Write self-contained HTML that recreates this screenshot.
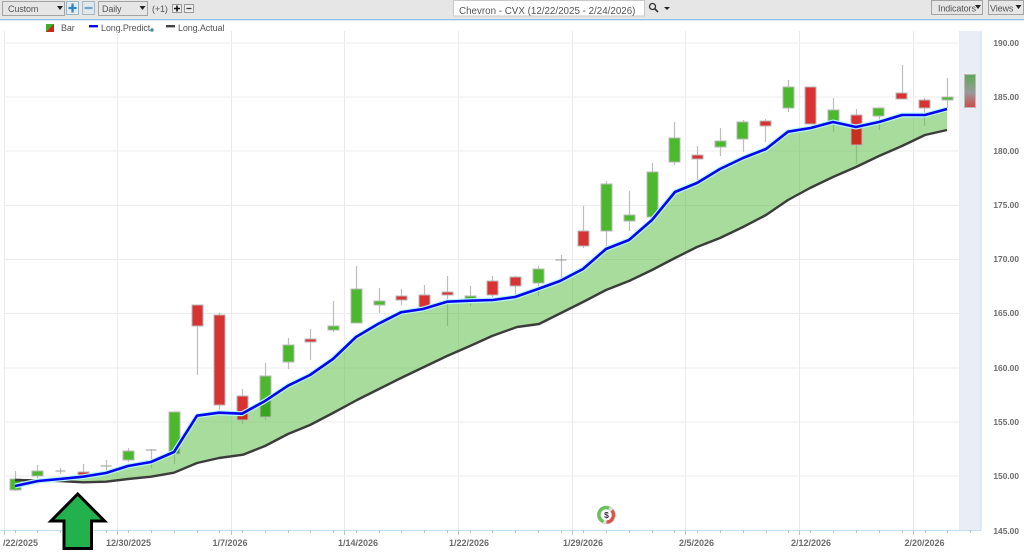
<!DOCTYPE html>
<html><head><meta charset="utf-8"><style>
html,body{margin:0;padding:0;background:#fff}
body{width:1024px;height:553px;overflow:hidden;position:relative}
svg{display:block;position:absolute;left:0;top:0;filter:blur(.3px)}
text{font-family:"Liberation Sans",sans-serif}
.tb{font-size:9px;fill:#555;letter-spacing:-.12px}
.ax{font-size:9px;fill:#6c6c6c;font-weight:bold}
.pr{font-size:8.4px}
.bx{fill:#e6e6e6;stroke:#a3a3a3;stroke-width:1}
.g rect{fill:#4cb82e;stroke:#b8b8b8;stroke-width:1}
.r rect{fill:#d93232;stroke:#b8b8b8;stroke-width:1}
</style></head><body>
<svg width="1024" height="553" viewBox="0 0 1024 553" xmlns="http://www.w3.org/2000/svg">
<defs>
<linearGradient id="fc" x1="0" y1="0" x2="0" y2="1"><stop offset="0" stop-color="#5fa855"/><stop offset=".55" stop-color="#999"/><stop offset="1" stop-color="#d04848"/></linearGradient>
<clipPath id="cf"><path d="M15 486L38 481L60 479L83 476.7L106 473L128 466L151 462L174 452L197 415.7L219 412.7L242 413.7L265 401L288 385.7L310 375L333 359L356 337L378 324L401 312.3L423 309L447 301.7L470 300.7L493 300L515 297L538 289L560 281L583 269L606 249L629 240L652 220L675 192L697 183L720 169L743 158L766 149L788 131.7L810.6 128L833 122L856 127L879 122L902 115L925 115L947 109L947 130L925 135L902 146L879 156L856 167L833 177L810 188L788 200L766 215L743 227L720 238L697 247L675 258L652 270L629 281L606 290L583 302L561 313L539 324L517 327L492 336L470 346L447 356L424 367L401 378L379 389L357 400L333 413L310 425L288 434L265 446L243 454.7L219 458L197 463L174 472.7L151 476.7L128 479L106 481.7L83 482.3L60 481L38 480.5L15 480Z"/></clipPath>
</defs>
<rect width="1024" height="553" fill="#fff"/>
<!-- toolbar -->
<rect width="1024" height="19" fill="#e6e6e6"/>
<rect x="0" y="19" width="1024" height="1.3" fill="#8fc3e6"/>
<rect x="2.5" y="1.5" width="62" height="14" class="bx"/>
<text x="8" y="12" class="tb">Custom</text>
<path d="M57 6h6l-3 4z" fill="#222"/>
<rect x="66.5" y="1.5" width="12" height="13" fill="#e3eef6" stroke="#9db4c4"/>
<path d="M72.5 3.5v9M68.5 8h8" stroke="#2a83c4" stroke-width="2.2"/>
<rect x="82.5" y="1.5" width="12" height="13" fill="#e0e8ee" stroke="#a9b6c0"/>
<path d="M84.5 8h8" stroke="#6fa8cc" stroke-width="2.2"/>
<rect x="98.5" y="1.5" width="49" height="14" class="bx"/>
<text x="102" y="12" class="tb">Daily</text>
<path d="M139.5 6h6l-3 4z" fill="#222"/>
<text x="152" y="12" class="tb">(+1)</text>
<rect x="172.5" y="4.5" width="9" height="8" fill="#eee" stroke="#999"/>
<path d="M177 5.5v6M174 8.5h6" stroke="#111" stroke-width="1.6"/>
<rect x="184.5" y="4.5" width="9" height="8" fill="#eee" stroke="#999"/>
<path d="M186.5 8.5h5" stroke="#333" stroke-width="1.3"/>
<rect x="453.5" y="0.5" width="191" height="15.5" fill="#fff" stroke="#c8c8c8"/>
<text x="459" y="14" fill="#555" style="font-size:9.8px">Chevron - CVX (12/22/2025 - 2/24/2026)</text>
<circle cx="652.5" cy="6.5" r="3" fill="none" stroke="#333" stroke-width="1.3"/>
<path d="M654.5 8.5l3.5 3.5" stroke="#333" stroke-width="1.6"/>
<path d="M664 7h6l-3 3z" fill="#222"/>
<rect x="931.5" y="0.5" width="51" height="14" class="bx"/>
<text x="938" y="11.500" class="tb">Indicators</text>
<path d="M975 5h6l-3 4z" fill="#222"/>
<rect x="988.5" y="0.5" width="35" height="14" class="bx"/>
<text x="990" y="11.500" class="tb">Views</text>
<path d="M1015.5 5h6l-3 4z" fill="#222"/>
<!-- legend -->
<rect x="46" y="24" width="8" height="8" fill="#d92020"/>
<path d="M46 24h8l-8 8z" fill="#3fae2a"/>
<text x="61" y="31" class="tb">Bar</text>
<rect x="89" y="25" width="9" height="2.4" fill="#0a0aee"/>
<text x="101" y="31" class="tb">Long.Predict</text>
<circle cx="152" cy="30" r="1.7" fill="#3a8aa5"/>
<rect x="166" y="25" width="9" height="2.4" fill="#444"/>
<text x="178" y="31" class="tb">Long.Actual</text>
<!-- forecast band -->
<rect x="959" y="31" width="21.5" height="499.5" fill="#e8edf6"/>
<path d="M981 31v499.5" stroke="#c6def2" stroke-width="1"/>
<!-- grid -->
<path d="M4.5 31V530M117.5 31V530M231.5 31V530M344.5 31V530M458.5 31V530M572.5 31V530M685.5 31V530M799.5 31V530M913.5 31V530" stroke="#ebebeb" stroke-width="1"/>
<path d="M4 43h955M4 97h955M4 151h955M4 205.5h955M4 259.5h955M4 313.5h955M4 368h955M4 422h955M4 476h955" stroke="#ececec" stroke-width="1"/>
<!-- axis -->
<path d="M0 530.5H981" stroke="#c3dff2" stroke-width="1"/>
<path d="M4.5 530v5M15.5 530v3M37.5 530v3M60.5 530v3M83.5 530v3M106.5 530v3M117.5 530v5M128.5 530v3M151.5 530v3M174.5 530v3M197.5 530v3M219.5 530v3M231.5 530v5M242.5 530v3M265.5 530v3M288.5 530v3M310.5 530v3M333.5 530v3M344.5 530v5M356.5 530v3M379.5 530v3M401.5 530v3M424.5 530v3M447.5 530v3M458.5 530v5M470.5 530v3M492.5 530v3M515.5 530v3M538.5 530v3M561.5 530v3M572.5 530v5M583.5 530v3M606.5 530v3M629.5 530v3M652.5 530v3M674.5 530v3M685.5 530v5M697.5 530v3M720.5 530v3M743.5 530v3M766.5 530v3M788.5 530v3M799.5 530v5M810.5 530v3M833.5 530v3M856.5 530v3M879.5 530v3M902.5 530v3M913.5 530v5M925.5 530v3M947.5 530v3M970.5 530v3" stroke="#b4c6d2" stroke-width="1"/>
<g class="ax">
<text x="3" y="546">/22/2025</text>
<text x="106" y="546">12/30/2025</text>
<text x="212.500" y="546">1/7/2026</text>
<text x="338" y="546">1/14/2026</text>
<text x="449" y="546">1/22/2026</text>
<text x="563" y="546">1/29/2026</text>
<text x="679" y="546">2/5/2026</text>
<text x="791" y="546">2/12/2026</text>
<text x="904.500" y="546">2/20/2026</text>
<g text-anchor="end" class="pr">
<text x="1019" y="46">190.00</text><text x="1019" y="100">185.00</text><text x="1019" y="154">180.00</text><text x="1019" y="208">175.00</text><text x="1019" y="262">170.00</text><text x="1019" y="316">165.00</text><text x="1019" y="371">160.00</text><text x="1019" y="425">155.00</text><text x="1019" y="479">150.00</text><text x="1019" y="534">145.00</text>
</g></g>
<!-- wicks -->
<path d="M15.5 471v20M37.5 465v13M60.5 468v6M83.5 464v14M106.5 460v14M128.5 448v14M151.5 449v19M174.5 412v52M197.5 305v70M219.5 313v97M242.5 389v35M265.5 363v57M288.5 338v31M310.5 329v31M333.5 301v31M356.5 266v57M379.5 288v25M401.5 289v16M424.5 285v27M447.5 276v50M470.5 286v20M492.5 276v21M515.5 276v20M538.5 266v30M561.5 255v25M583.5 206v42M606.5 181v65M629.5 191v40M652.5 163v55M674.5 122v43M697.5 146v34M720.5 128v28M743.5 120v32M765.5 119v23M788.5 80v32M810.5 87v37M833.5 98v34M856.5 109v55M879.5 108v22M902.5 65v34M924.5 98v28M947.5 78v30" stroke="#bdbdbd" stroke-width="1.2"/>
<path d="M55.5 471h10M100.5 466h11M145.5 450h11M555.5 260h11" stroke="#999" stroke-width="1"/>
<!-- fill -->
<path d="M15 486L38 481L60 479L83 476.7L106 473L128 466L151 462L174 452L197 415.7L219 412.7L242 413.7L265 401L288 385.7L310 375L333 359L356 337L378 324L401 312.3L423 309L447 301.7L470 300.7L493 300L515 297L538 289L560 281L583 269L606 249L629 240L652 220L675 192L697 183L720 169L743 158L766 149L788 131.7L810.6 128L833 122L856 127L879 122L902 115L925 115L947 109L947 130L925 135L902 146L879 156L856 167L833 177L810 188L788 200L766 215L743 227L720 238L697 247L675 258L652 270L629 281L606 290L583 302L561 313L539 324L517 327L492 336L470 346L447 356L424 367L401 378L379 389L357 400L333 413L310 425L288 434L265 446L243 454.7L219 458L197 463L174 472.7L151 476.7L128 479L106 481.7L83 482.3L60 481L38 480.5L15 480Z" fill="rgba(97,191,75,.55)"/>
<!-- green bodies -->
<g class="g">
<rect x="10" y="479" width="11" height="11"/><rect x="32" y="471" width="11" height="5"/><rect x="123" y="451" width="11" height="9"/><rect x="169" y="412" width="11" height="42"/><rect x="260" y="376" width="11" height="41"/><rect x="283" y="345" width="11" height="17"/><rect x="328" y="326" width="11" height="4"/><rect x="351" y="289" width="11" height="34"/><rect x="374" y="301" width="11" height="4"/><rect x="465" y="296" width="11" height="4"/><rect x="533" y="269" width="11" height="14"/><rect x="601" y="184" width="11" height="47"/><rect x="624" y="215" width="11" height="6"/><rect x="647" y="172" width="11" height="45"/><rect x="669" y="138" width="11" height="24"/><rect x="715" y="141" width="11" height="6"/><rect x="737" y="122" width="11" height="17"/><rect x="783" y="87" width="11" height="21"/><rect x="828" y="110" width="11" height="12"/><rect x="873" y="108" width="11" height="8"/><rect x="942" y="97" width="11" height="3"/>
</g>
<!-- red bodies -->
<g class="r">
<rect x="78" y="472" width="11" height="4"/><rect x="192" y="305" width="11" height="21"/><rect x="214" y="315" width="11" height="90"/><rect x="237" y="396" width="11" height="24"/><rect x="305" y="339" width="11" height="3"/><rect x="396" y="296" width="11" height="4"/><rect x="419" y="295" width="11" height="15"/><rect x="442" y="292" width="11" height="3"/><rect x="487" y="281" width="11" height="14"/><rect x="510" y="277" width="11" height="9"/><rect x="578" y="231" width="11" height="15"/><rect x="692" y="155" width="11" height="4"/><rect x="760" y="121" width="11" height="5"/><rect x="805" y="87" width="11" height="37"/><rect x="851" y="115" width="11" height="30"/><rect x="896" y="93" width="11" height="6"/><rect x="919" y="100" width="11" height="8"/>
</g>
<!-- darker parts of bodies where they overlap the area -->
<g clip-path="url(#cf)">
<rect x="10.5" y="479.500" width="10" height="10" fill="#38a61e"/>
<rect x="169.500" y="412.500" width="10" height="41" fill="#38a61e"/>
<rect x="260.500" y="376.500" width="10" height="40" fill="#38a61e"/>
<rect x="647.500" y="172.500" width="10" height="44" fill="#38a61e"/>
<rect x="237.500" y="396.500" width="10" height="23" fill="#c83020"/>
<rect x="419.500" y="295.500" width="10" height="14" fill="#c83020"/>
<rect x="851.500" y="115.500" width="10" height="29" fill="#c83020"/>
<rect x="805.500" y="87.500" width="10" height="36" fill="#c83020"/>
<rect x="214.500" y="315.500" width="10" height="89" fill="#c83020"/>
</g>
<!-- forecast bar -->
<rect x="964.5" y="74.5" width="11" height="33" fill="url(#fc)" stroke="#bbb"/>
<!-- actual -->
<path d="M15 480L38 480.5L60 481L83 482.3L106 481.7L128 479L151 476.7L174 472.7L197 463L219 458L243 454.7L265 446L288 434L310 425L333 413L357 400L379 389L401 378L424 367L447 356L470 346L492 336L517 327L539 324L561 313L583 302L606 290L629 281L652 270L675 258L697 247L720 238L743 227L766 215L788 200L810 188L833 177L856 167L879 156L902 146L925 135L947 130" fill="none" stroke="#3c3c3c" stroke-width="2.4" stroke-linejoin="round"/>
<!-- predict -->
<path d="M15 486L38 481L60 479L83 476.7L106 473L128 466L151 462L174 452L197 415.7L219 412.7L242 413.7L265 401L288 385.7L310 375L333 359L356 337L378 324L401 312.3L423 309L447 301.7L470 300.7L493 300L515 297L538 289L560 281L583 269L606 249L629 240L652 220L675 192L697 183L720 169L743 158L766 149L788 131.7L810.6 128L833 122L856 127L879 122L902 115L925 115L947 109" fill="none" stroke="#b8f6fa" stroke-width="5" stroke-linejoin="round"/>
<path d="M15 486L38 481L60 479L83 476.7L106 473L128 466L151 462L174 452L197 415.7L219 412.7L242 413.7L265 401L288 385.7L310 375L333 359L356 337L378 324L401 312.3L423 309L447 301.7L470 300.7L493 300L515 297L538 289L560 281L583 269L606 249L629 240L652 220L675 192L697 183L720 169L743 158L766 149L788 131.7L810.6 128L833 122L856 127L879 122L902 115L925 115L947 109" fill="none" stroke="#0505f0" stroke-width="2.6" stroke-linejoin="round"/>
<!-- coin -->
<circle cx="606.5" cy="515" r="9.5" fill="#ddd"/>
<circle cx="606.5" cy="515" r="5.5" fill="#fff"/>
<path d="M609 508.200A7.200 7.200 0 1 0 603.500 521.500" fill="none" stroke="#6cbf5a" stroke-width="3.400"/>
<path d="M611.800 510.500A7.200 7.200 0 0 1 606.500 522.200" fill="none" stroke="#d9534a" stroke-width="3.400"/>
<text x="606.5" y="518" text-anchor="middle" style="font-size:8.5px;font-weight:bold" fill="#334">$</text>
<!-- arrow -->
<path d="M77.700 494L51 521H64V548.500H91.500V521H104.500Z" fill="#22b14c" stroke="#000" stroke-width="3" stroke-linejoin="miter"/>
</svg>
</body></html>
